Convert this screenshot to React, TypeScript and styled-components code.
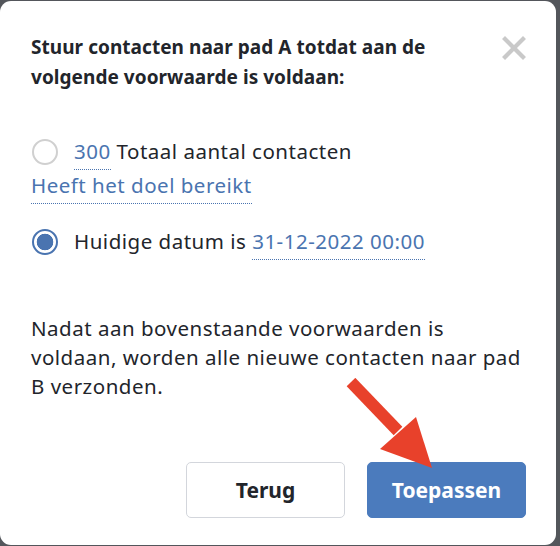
import React, { useState } from "react";
import styled, { createGlobalStyle } from "styled-components";

const cl = {
  text: "#22252b",
  link: "#4a74b0",
  blue: "#4b7bbd",
  gray: "#c9c9c9",
  border: "#d3d6dc",
  backdrop: "#53565b",
  red: "#e8412b",
};

const GlobalStyle = createGlobalStyle`
  html, body {
    margin: 0;
    padding: 0;
    background: ${cl.backdrop};
  }
  * {
    box-sizing: border-box;
  }
`;

type Choice = "count" | "date";

const App = () => {
  const [choice, setChoice] = useState<Choice>("date");

  return (
    <>
      <GlobalStyle />
      <Backdrop>
        <Modal>
          <Header>
            <Title>
              Stuur contacten naar pad A totdat aan de volgende voorwaarde is
              voldaan:
            </Title>
            <CloseBtn aria-label="Sluiten">
              <svg width="24" height="24" viewBox="0 0 24 24">
                <path
                  d="M3 3 L21 21 M21 3 L3 21"
                  stroke={cl.gray}
                  strokeWidth="4.2"
                  strokeLinecap="square"
                />
              </svg>
            </CloseBtn>
          </Header>

          <Options>
            <Option onClick={() => setChoice("count")}>
              <Radio checked={choice === "count"} />
              <Value>300</Value> Totaal aantal contacten{" "}
              <Value>Heeft het doel bereikt</Value>
            </Option>
            <Option onClick={() => setChoice("date")}>
              <Radio checked={choice === "date"} />
              Huidige datum is <Value>31-12-2022 00:00</Value>
            </Option>
          </Options>

          <Note>
            Nadat aan bovenstaande voorwaarden is voldaan, worden alle nieuwe
            contacten naar pad B verzonden.
          </Note>

          <Footer>
            <Btn>Terug</Btn>
            <Btn primary>Toepassen</Btn>
          </Footer>

          <Arrow width="100" height="100" viewBox="0 0 100 100">
            <path d="M5 4 L52 53" stroke={cl.red} strokeWidth="12" />
            <polygon points="34,71 70,39 86,90" fill={cl.red} />
          </Arrow>
        </Modal>
      </Backdrop>
    </>
  );
};

const Backdrop = styled.div`
  height: 546px;
  padding: 1px 4px 1px 0;
  display: flex;
`;
const Modal = styled.div`
  position: relative;
  flex: 1;
  display: flex;
  flex-direction: column;
  background: #fff;
  border-radius: 11px;
  padding: 31px 30px 27px 31px;
  font-family: "Noto Sans", "Open Sans", sans-serif;
  color: ${cl.text};
`;
const Header = styled.div`
  display: flex;
  justify-content: space-between;
  align-items: flex-start;
`;
const Title = styled.h2`
  margin: 0;
  max-width: 440px;
  font-size: 19px;
  line-height: 30px;
  font-weight: 700;
  letter-spacing: 0.05px;
`;
const CloseBtn = styled.button`
  border: 0;
  background: none;
  padding: 0;
  margin-top: 4px;
  display: flex;
  cursor: pointer;
`;
const Options = styled.div`
  margin-top: 42px;
  display: flex;
  flex-direction: column;
  gap: 22px;
`;
const Option = styled.div`
  font-size: 20.5px;
  line-height: 34px;
  letter-spacing: 0.5px;
  cursor: pointer;
`;
const Radio = styled.span<{ checked?: boolean }>`
  display: inline-block;
  vertical-align: -6px;
  width: 26px;
  height: 26px;
  margin: 0 16px 0 1px;
  border-radius: 50%;
  border: 2px solid ${({ checked }) => (checked ? cl.link : "#d0d0d0")};
  background: ${({ checked }) =>
    checked
      ? `radial-gradient(circle, ${cl.link} 0 8px, #fff 8.6px)`
      : "#fff"};
`;
const Value = styled.span`
  color: ${cl.link};
  white-space: nowrap;
  padding-bottom: 4px;
  border-bottom: 1.5px dotted ${cl.link};
`;
const Note = styled.p`
  margin: 56px 0 0;
  font-size: 20.5px;
  line-height: 29px;
  letter-spacing: 0.5px;
`;
const Footer = styled.div`
  margin-top: auto;
  display: flex;
  justify-content: flex-end;
  gap: 22px;
`;
const Btn = styled.button<{ primary?: boolean }>`
  width: 159px;
  height: 56px;
  border-radius: 5px;
  font-family: inherit;
  font-size: 21px;
  font-weight: 700;
  cursor: pointer;
  border: 1px solid ${({ primary }) => (primary ? cl.blue : cl.border)};
  background: ${({ primary }) => (primary ? cl.blue : "#fff")};
  color: ${({ primary }) => (primary ? "#fff" : cl.text)};
`;
const Arrow = styled.svg`
  position: absolute;
  left: 346px;
  top: 377px;
  pointer-events: none;
`;

export default App;
